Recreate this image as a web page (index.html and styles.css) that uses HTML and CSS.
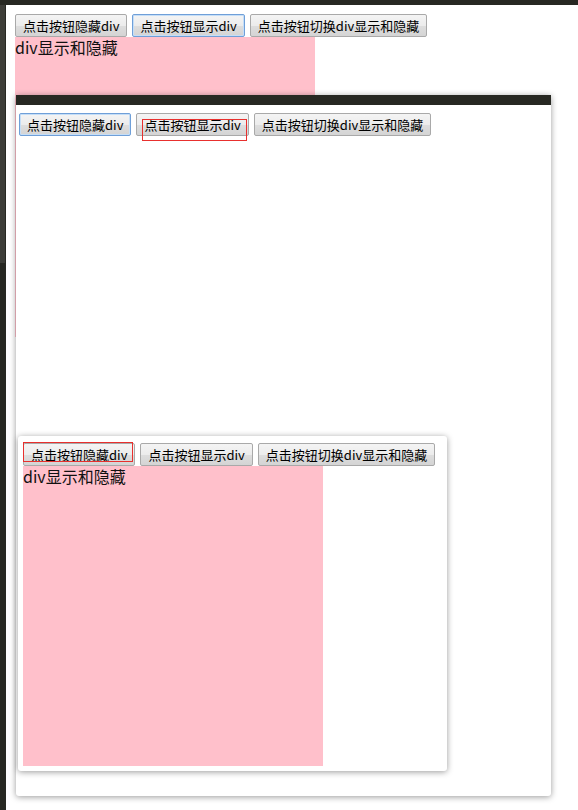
FILE: index.html
```html
<!DOCTYPE html>
<html lang="zh-CN">
<head>
    <meta charset="UTF-8">
    <meta name="viewport" content="width=device-width, initial-scale=1.0">
    <title>div显示和隐藏</title>
    <link rel="stylesheet" href="styles.css">
</head>
<body>

<div class="desk">
    <div class="topbar"></div>
    <div class="workspace">
        <!-- editor gutter on the left -->
        <div class="rail"><div class="rail-thumb"></div></div>

        <div class="screen">
            <!-- First state: page as loaded -->
            <div class="page page-base">
                <div class="controls">
                    <button class="btn">点击按钮隐藏div</button>
                    <button class="btn is-focus">点击按钮显示div</button>
                    <button class="btn">点击按钮切换div显示和隐藏</button>
                </div>
                <div class="box">div显示和隐藏</div>
            </div>

            <!-- Second state: div hidden -->
            <div class="shot shot-hidden">
                <div class="shot-bar"></div>
                <div class="page page-hidden">
                    <div class="controls">
                        <button class="btn is-focus">点击按钮隐藏div</button>
                        <button class="btn">点击按钮显示div</button>
                        <button class="btn">点击按钮切换div显示和隐藏</button>
                    </div>
                </div>
                <div class="mark mark-show"></div>
            </div>

            <!-- Third state: div shown again -->
            <div class="shot shot-shown">
                <div class="page page-shown">
                    <div class="controls">
                        <button class="btn">点击按钮隐藏div</button>
                        <button class="btn">点击按钮显示div</button>
                        <button class="btn">点击按钮切换div显示和隐藏</button>
                    </div>
                    <div class="box">div显示和隐藏</div>
                </div>
                <div class="mark mark-hide"></div>
            </div>
        </div>
    </div>
</div>

</body>
</html>
```

FILE: styles.css
```css
body {
    margin: 0;
    padding: 0;
    font-family: "Noto Sans CJK SC", "Noto Sans", sans-serif;
    color: #111;
    background-color: #fff;
}

.desk {
    width: 578px;
    height: 810px;
    display: flex;
    flex-direction: column;
    overflow: hidden;
}

.topbar {
    height: 5px;
    background-color: #272822;
    flex-shrink: 0;
}

.workspace {
    flex: 1;
    display: flex;
}

.rail {
    width: 6px;
    background-color: #272822;
    flex-shrink: 0;
}

.rail-thumb {
    width: 5px;
    height: 258px;
    background-color: #3d3d38;
}

.screen {
    flex: 1;
    position: relative;
    background-color: #fff;
}

/* Page content */
.page-base {
    padding: 9px 0 0 9px;
}

.controls {
    display: flex;
    gap: 5px;
}

.btn {
    height: 23px;
    margin: 0;
    padding: 0 7px;
    font-family: "Noto Sans CJK SC", "Noto Sans", sans-serif;
    font-size: 13px;
    line-height: 21px;
    color: #000;
    border: 1px solid #a9a9a9;
    border-radius: 2px;
    background: linear-gradient(#f4f4f4 0%, #ececec 50%, #dedede 51%, #d4d4d4 100%);
    cursor: pointer;
}

.btn.is-focus {
    border-color: #6f9fd8;
    box-shadow: inset 0 0 0 1px #c5def7;
}

.box {
    width: 300px;
    height: 300px;
    background-color: pink;
    font-size: 16px;
    line-height: 20px;
}

/* Screenshots laid over the page */
.shot {
    position: absolute;
    background-color: #fff;
    box-shadow: 0 1px 6px rgba(0, 0, 0, 0.4);
}

.shot-hidden {
    left: 10px;
    top: 90px;
    width: 535px;
    height: 701px;
    border-radius: 0 0 3px 3px;
}

.shot-bar {
    height: 10px;
    background-color: #272822;
}

.page-hidden {
    padding: 8px 0 0 3px;
}

.shot-shown {
    left: 12px;
    top: 431px;
    width: 429px;
    height: 335px;
    border-radius: 3px;
}

.page-shown {
    padding: 7px 0 0 5px;
}

.mark {
    position: absolute;
    border: 1px solid #e8302e;
}

.mark-show {
    left: 126px;
    top: 24px;
    width: 103px;
    height: 20px;
}

.mark-hide {
    left: 5px;
    top: 6px;
    width: 108px;
    height: 18px;
}
```
